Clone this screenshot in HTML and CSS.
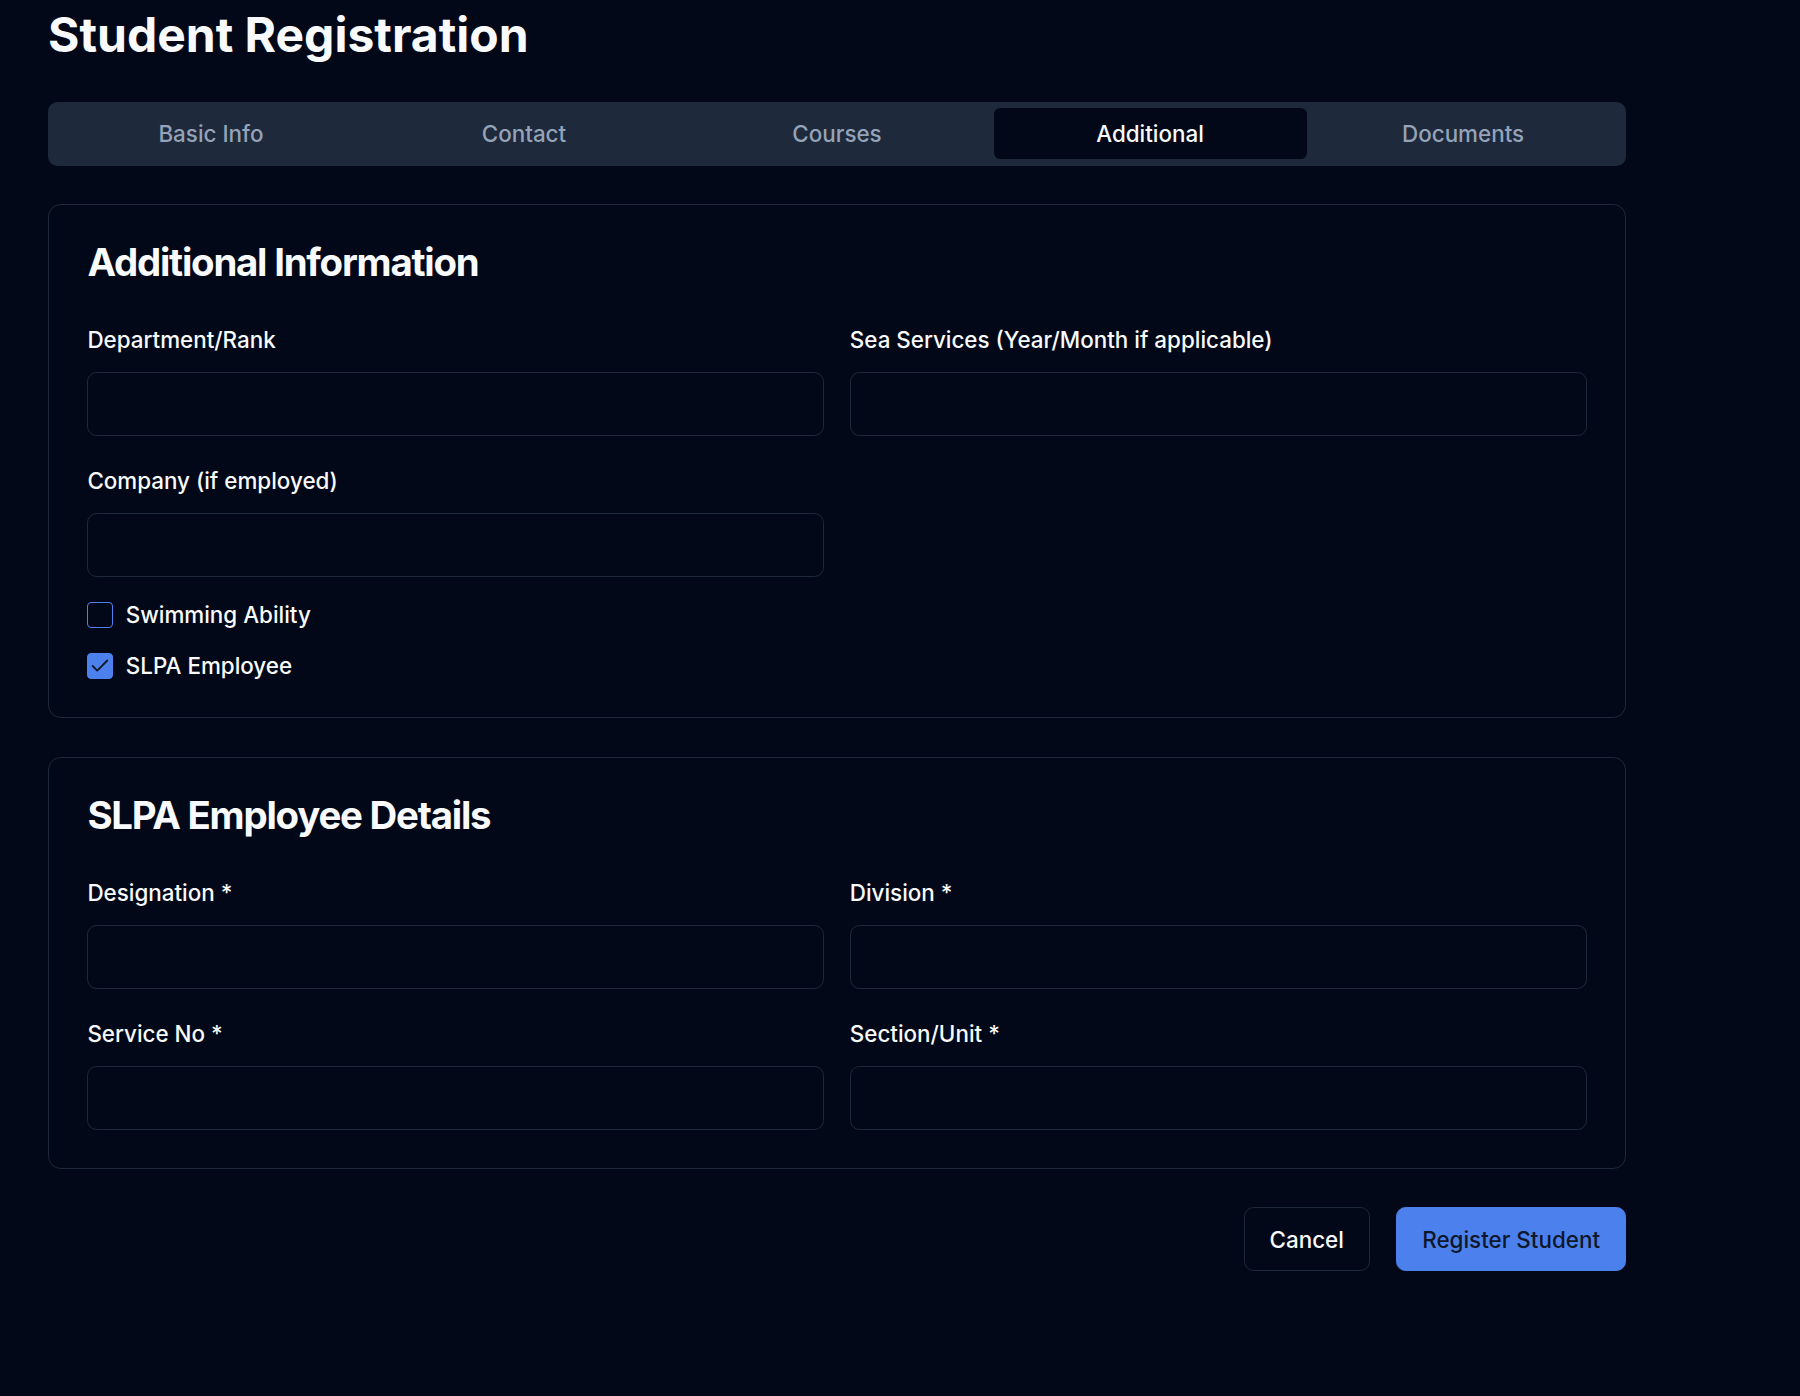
FILE: index.html
```html
<!DOCTYPE html>
<html lang="en">
<head>
<meta charset="utf-8">
<title>Student Registration</title>
<link rel="stylesheet" href="styles.css">
</head>
<body>
<div class="page">
  <h1 class="page-title">Student Registration</h1>

  <div class="tabs-list">
    <button class="tab">Basic Info</button>
    <button class="tab">Contact</button>
    <button class="tab">Courses</button>
    <button class="tab active">Additional</button>
    <button class="tab">Documents</button>
  </div>

  <section class="card">
    <h2 class="card-title">Additional Information</h2>
    <div class="card-content">
      <div class="grid">
        <div class="field">
          <label class="label">Department/Rank</label>
          <input class="input" type="text">
        </div>
        <div class="field">
          <label class="label">Sea Services (Year/Month if applicable)</label>
          <input class="input" type="text">
        </div>
        <div class="field">
          <label class="label">Company (if employed)</label>
          <input class="input" type="text">
        </div>
      </div>
      <div class="checks">
        <div class="check-row">
          <span class="checkbox"></span>
          <span class="check-label">Swimming Ability</span>
        </div>
        <div class="check-row">
          <span class="checkbox checked">
            <svg viewBox="0 0 24 24" width="26" height="26" fill="none" stroke="currentColor" stroke-width="2" stroke-linecap="round" stroke-linejoin="round"><polyline points="20 6 9 17 4 12"></polyline></svg>
          </span>
          <span class="check-label">SLPA Employee</span>
        </div>
      </div>
    </div>
  </section>

  <section class="card">
    <h2 class="card-title">SLPA Employee Details</h2>
    <div class="card-content">
      <div class="grid">
        <div class="field">
          <label class="label">Designation *</label>
          <input class="input" type="text">
        </div>
        <div class="field">
          <label class="label">Division *</label>
          <input class="input" type="text">
        </div>
        <div class="field">
          <label class="label">Service No *</label>
          <input class="input" type="text">
        </div>
        <div class="field">
          <label class="label">Section/Unit *</label>
          <input class="input" type="text">
        </div>
      </div>
    </div>
  </section>

  <div class="actions">
    <button class="btn btn-outline">Cancel</button>
    <button class="btn btn-primary">Register Student</button>
  </div>
</div>
</body>
</html>
```

FILE: styles.css
```css
* { box-sizing: border-box; }

html, body {
  margin: 0;
  padding: 0;
  background: #020817;
  color: #f8fafc;
  font-family: Inter, "Noto Sans", "Liberation Sans", sans-serif;
}

.page {
  width: 1626px;
  padding: 5.7px 0 80px 48px;
  display: flex;
  flex-direction: column;
  gap: 38.4px;
}

.page-title {
  margin: 0;
  font-size: 48px;
  line-height: 57.6px;
  font-weight: 700;
  color: #f8fafc;
}

.tabs-list {
  height: 64px;
  padding: 6.4px;
  background: #1e293b;
  border-radius: 9.6px;
  display: grid;
  grid-template-columns: repeat(5, 1fr);
}

.tab {
  border: 0;
  background: transparent;
  color: #94a3b8;
  font-family: inherit;
  font-size: 22.4px;
  font-weight: 500;
  line-height: 32px;
  border-radius: 6.4px;
  padding: 0;
  cursor: pointer;
}

.tab.active {
  background: #020817;
  color: #f8fafc;
}

.card {
  border: 1px solid #1e293b;
  border-radius: 12.8px;
  padding: 38.4px;
}

.card-title {
  margin: 0;
  font-size: 38.4px;
  line-height: 38.4px;
  font-weight: 700;
  letter-spacing: -0.032em;
}

.card-content {
  padding-top: 46.85px;
  display: flex;
  flex-direction: column;
  gap: 25.6px;
}

.grid {
  display: grid;
  grid-template-columns: 1fr 1fr;
  column-gap: 25.6px;
  row-gap: 34px;
}

.field {
  display: flex;
  flex-direction: column;
}

.label {
  font-size: 22.4px;
  line-height: 22.4px;
  font-weight: 500;
  margin-bottom: 20.6px;
}

.input {
  height: 64px;
  width: 100%;
  border: 1px solid #1e293b;
  border-radius: 9.6px;
  background: #020817;
  color: #f8fafc;
  font-family: inherit;
  font-size: 22.4px;
  padding: 0 19px;
}

.checks {
  display: flex;
  flex-direction: column;
  gap: 25.6px;
}

.check-row {
  display: flex;
  align-items: center;
  gap: 12.8px;
  height: 25.6px;
}

.checkbox {
  width: 25.6px;
  height: 25.6px;
  border: 1.3px solid #4c81ed;
  border-radius: 4px;
  display: flex;
  align-items: center;
  justify-content: center;
  flex: none;
}

.checkbox.checked {
  background: #4c81ed;
  color: #0f172a;
}

.checkbox svg {
  width: 22px;
  height: 22px;
}

.check-label {
  font-size: 22.4px;
  line-height: 22.4px;
  font-weight: 500;
}

.actions {
  display: flex;
  justify-content: flex-end;
  gap: 26.4px;
}

.btn {
  height: 64px;
  padding: 0 25px;
  border-radius: 9.6px;
  font-family: inherit;
  font-size: 22.4px;
  font-weight: 500;
  cursor: pointer;
}

.btn-outline {
  background: #020817;
  border: 1px solid #1e293b;
  color: #f8fafc;
}

.btn-primary {
  background: #4c81ed;
  border: 1px solid #4c81ed;
  color: #0f172a;
}
```
